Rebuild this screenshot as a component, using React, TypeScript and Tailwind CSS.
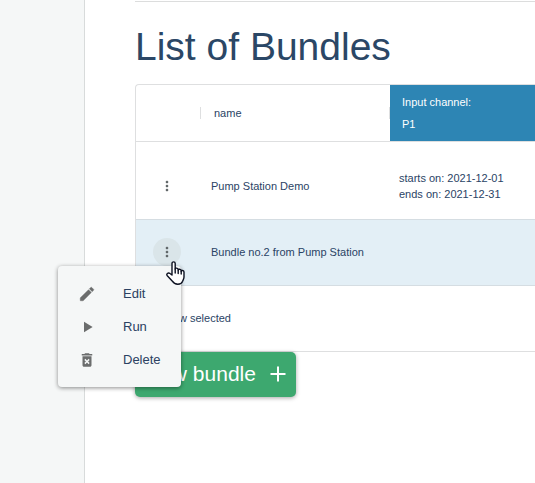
import { MdDeleteForever, MdMoreVert } from "react-icons/md";

const bundles = [
  { id: 1, name: "Pump Station Demo", starts: "2021-12-01", ends: "2021-12-31" },
  { id: 2, name: "Bundle no.2 from Pump Station", selected: true },
];

function EditIcon() {
  return (
    <svg viewBox="0 0 24 24" className="size-[18px]" fill="currentColor" stroke="currentColor" strokeWidth="0.6" aria-hidden="true">
      <path d="M3 17.46v3.04c0 .28.22.5.5.5h3.04c.13 0 .26-.05.35-.15L17.81 9.94l-3.75-3.75L3.15 17.1c-.1.1-.15.22-.15.36zM20.71 7.04a.996.996 0 0 0 0-1.41l-2.34-2.34a.996.996 0 0 0-1.41 0l-1.83 1.83 3.75 3.75 1.83-1.83z" />
    </svg>
  );
}

function PlayIcon() {
  return (
    <svg viewBox="0 0 24 24" className="size-[18px]" fill="currentColor" aria-hidden="true">
      <path d="M8 5v14l11.5-7z" />
    </svg>
  );
}

function HandCursor() {
  return (
    <svg
      viewBox="0 0 19 24"
      className="pointer-events-none absolute top-[23px] left-[13px] z-20 h-6 w-[19px]"
      fill="#fff"
      stroke="#0b1020"
      strokeWidth="1.4"
      strokeLinejoin="round"
      strokeLinecap="round"
      aria-hidden="true"
    >
      <path d="M6 14V2.5C6 .3 9.2 .3 9.2 2.5V8C9.2 6.7 12.2 6.8 12.2 8.5V9C12.2 7.7 15.2 8 15.2 9.6V10.2C15.2 9 18 9.2 18 11V16C18 18 17 19 16.6 20.2C15.8 22.4 14 23.2 11.8 23.2C9 23.2 7.6 22.2 6.4 20.2L1.3 14.8C-.1 13 2.2 11 4 12.5Z" />
      <path d="M9.2 8V12M12.2 9V12.5M15.2 10.2V13" fill="none" />
    </svg>
  );
}

const actions = [
  { label: "Edit", icon: <EditIcon /> },
  { label: "Run", icon: <PlayIcon /> },
  { label: "Delete", icon: <MdDeleteForever size={18} /> },
];

function ActionMenu() {
  return (
    <div
      role="menu"
      className="absolute top-full right-0 z-10 w-[123px] rounded bg-[#f5f7f7] py-[11px] shadow-[0_1px_4px_rgba(0,0,0,0.45)]"
    >
      {actions.map((action) => (
        <button
          key={action.label}
          type="button"
          role="menuitem"
          className="flex h-[33px] w-full items-center gap-[27px] pl-5 text-left text-[13px] text-[#2b4162]"
        >
          <span className="text-[#6b6d6d]">{action.icon}</span>
          {action.label}
        </button>
      ))}
    </div>
  );
}

export default function App() {
  return (
    <div className="flex min-h-screen overflow-hidden bg-white font-['Liberation_Sans',Arial,sans-serif] text-[11px] text-[#2a4365]">
      <aside className="w-[85px] shrink-0 border-r border-[#d8dbdb] bg-[#f5f7f7]" />
      <main className="min-w-0 flex-1 pl-[50px]">
        <hr className="mt-px border-[#dcdddd]" />
        <h1 className="mt-[21px] mb-[13px] text-[39px] leading-12 text-[#2b4766]">List of Bundles</h1>

        <div className="rounded-l border border-r-0 border-[#dedfe0]">
          <table className="w-full table-fixed text-left">
            <thead>
              <tr className="h-14 border-b border-[#dedfe0]">
                <th className="w-[65px]" aria-label="actions">
                  <div className="ml-auto h-3 w-px bg-[#dedfe0]" />
                </th>
                <th className="w-[189px] font-normal">
                  <div className="flex items-center pl-[13px]">
                    name
                    <span className="ml-auto h-3 w-px bg-[#dedfe0]" />
                  </div>
                </th>
                <th className="bg-[#2d85b4] pl-3 leading-[22px] font-normal text-white">
                  Input channel:
                  <br />
                  P1
                </th>
              </tr>
            </thead>
            <tbody>
              <tr className="h-3" aria-hidden="true" />
              {bundles.map((bundle) => (
                <tr
                  key={bundle.id}
                  className={`h-[66px] border-b border-[#d5dde2] ${bundle.selected ? "bg-[#e3eff6]" : ""}`}
                >
                  <td>
                    <div className="relative ml-[17px] size-7">
                      <button
                        type="button"
                        aria-label={`Actions for ${bundle.name}`}
                        className={`flex size-7 items-center justify-center rounded-full text-[#606668] ${bundle.selected ? "bg-[#dae5e9]" : ""}`}
                      >
                        <MdMoreVert size={16} />
                      </button>
                      {bundle.selected && (
                        <>
                          <ActionMenu />
                          <HandCursor />
                        </>
                      )}
                    </div>
                  </td>
                  <td className="pl-2.5">{bundle.name}</td>
                  <td className="pl-[9px] leading-4">
                    {bundle.starts && (
                      <>
                        starts on: {bundle.starts}
                        <br />
                        ends on: {bundle.ends}
                      </>
                    )}
                  </td>
                </tr>
              ))}
            </tbody>
          </table>
          <div className="flex h-[65px] items-center pl-6">1 row selected</div>
        </div>

        <button
          type="button"
          className="flex h-[45px] items-center gap-3 rounded-[5px] bg-[#3da86f] pr-2 pl-2.5 text-[21px] text-white shadow-[0_1px_4px_rgba(0,0,0,0.35)]"
        >
          New bundle
          <svg viewBox="0 0 20 20" className="size-5" stroke="currentColor" strokeWidth="2" aria-hidden="true">
            <path d="M10 2.5v15M2.5 10h15" />
          </svg>
        </button>
      </main>
    </div>
  );
}
